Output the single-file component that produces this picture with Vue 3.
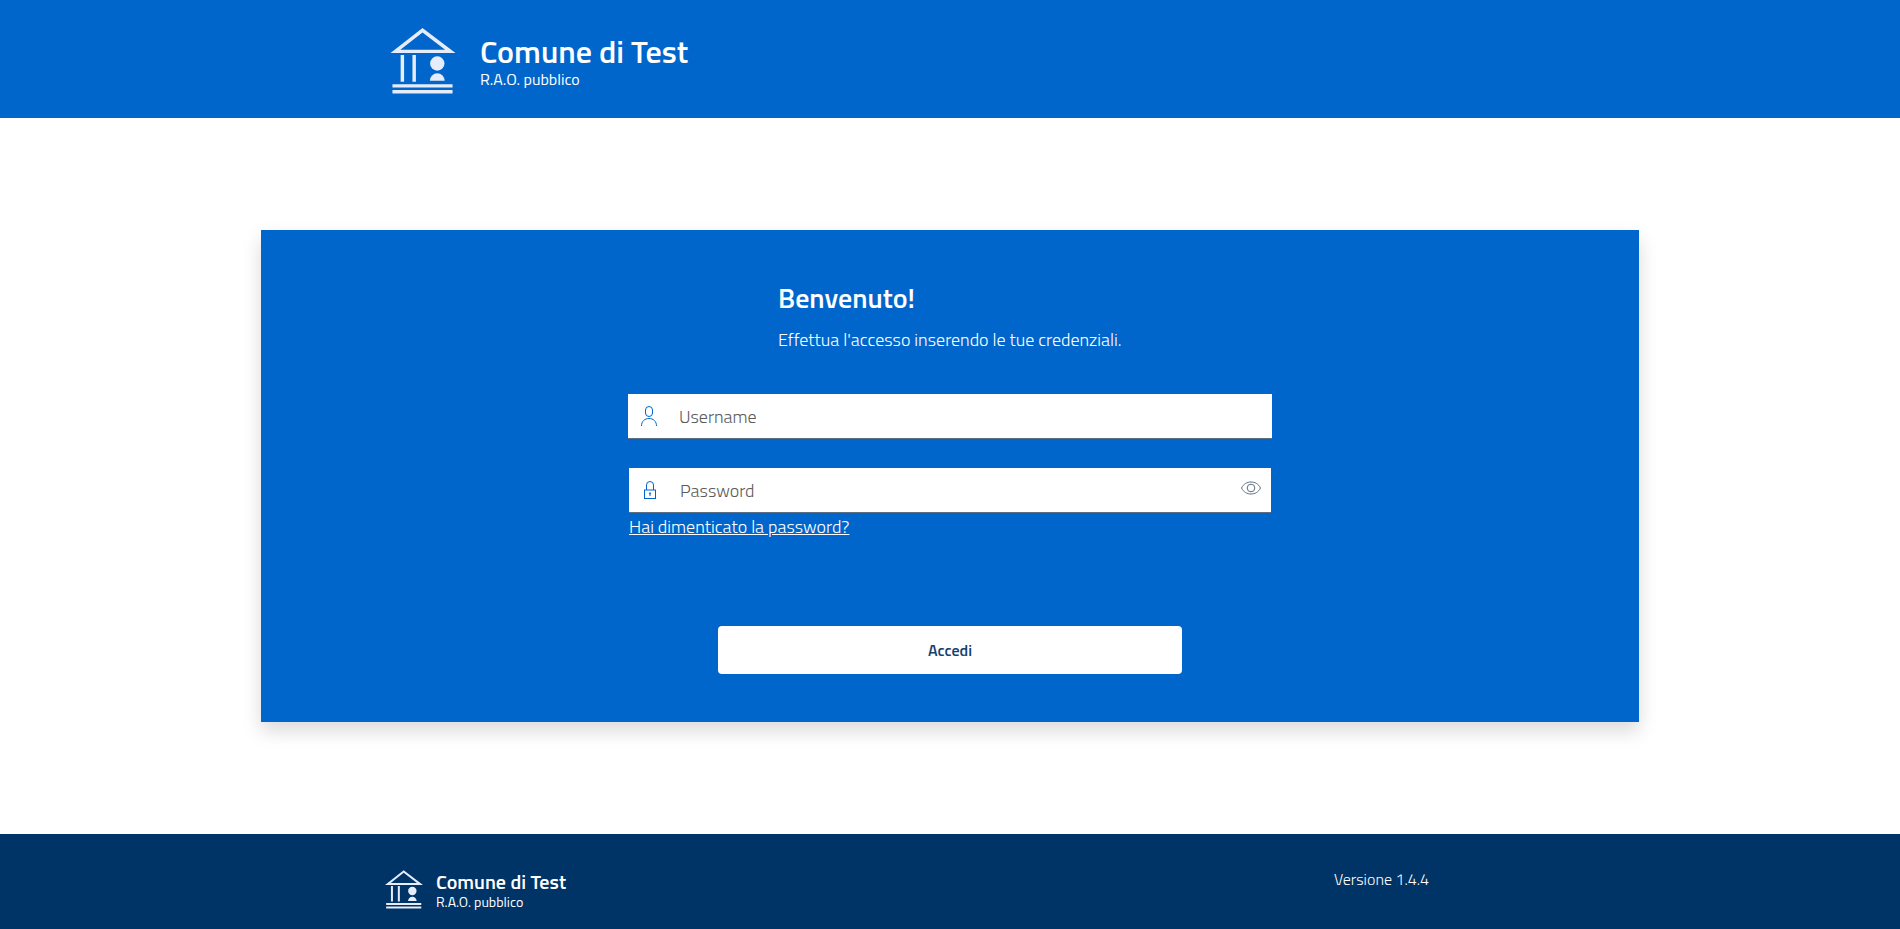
<script setup>
import { ref } from 'vue'

const username = ref('')
const password = ref('')
const showPassword = ref(false)

const logoShapes = [
  'M32.5 0 66 25.5H0ZM32.5 4.5 10 22H55.500Z',
  'M10.300 27.500h3.500v27h-3.500ZM22.300 27.500h3.500v27h-3.500Z',
  'M2 57h61v3.400H2ZM2 63h61v3.400H2Z',
  'M40 53.500a7.500 7.500 0 0 1 15 0Z',
]
</script>

<template>
  <div class="page">
    <header class="header">
      <div class="header-inner">
        <svg class="logo" viewBox="0 0 66 67" aria-hidden="true">
          <path v-for="d in logoShapes" :key="d" :d="d" fill-rule="evenodd" />
          <circle cx="47.500" cy="36" r="7.300" />
        </svg>
        <div class="brand">
          <h2 class="brand-name">Comune di Test</h2>
          <p class="brand-sub">R.A.O. pubblico</p>
        </div>
      </div>
    </header>

    <main class="main">
      <form class="card" @submit.prevent>
        <div class="intro">
          <h1>Benvenuto!</h1>
          <p>Effettua l'accesso inserendo le tue credenziali.</p>
        </div>

        <div class="field">
          <label for="username" aria-label="Username">
            <svg class="icon" viewBox="0 0 24 24" aria-hidden="true">
              <rect x="8.500" y="2.500" width="7" height="10" rx="3.500" />
              <path d="M4.500 22c0-4.700 3.200-7.500 7.500-7.500s7.500 2.800 7.500 7.500" />
            </svg>
          </label>
          <input id="username" v-model="username" type="text" placeholder="Username" />
        </div>

        <div class="secret">
          <div class="field">
            <label for="password" aria-label="Password">
              <svg class="icon" viewBox="0 0 24 24" aria-hidden="true">
                <path d="M8.500 12V7a3.500 3.500 0 0 1 7 0v5" />
                <rect x="6.500" y="12" width="11" height="8.500" />
                <path d="M12 15v3" />
                <circle cx="12" cy="15.300" r=".6" />
              </svg>
            </label>
            <input
              id="password"
              v-model="password"
              :type="showPassword ? 'text' : 'password'"
              placeholder="Password"
            />
            <button
              class="reveal"
              type="button"
              aria-label="Mostra password"
              @click="showPassword = !showPassword"
            >
              <svg viewBox="0 0 24 24" aria-hidden="true">
                <path d="M2.500 12C4.500 8 8 6 12 6s7.500 2 9.500 6c-2 4-5.500 6-9.500 6s-7.500-2-9.500-6Z" />
                <circle cx="12" cy="12" r="3.800" />
              </svg>
            </button>
          </div>
          <a class="forgot" href="#">Hai dimenticato la password?</a>
        </div>

        <button class="submit" type="submit">Accedi</button>
      </form>
    </main>

    <footer class="footer">
      <div class="footer-inner">
        <div class="footer-brand">
          <svg class="logo" viewBox="0 0 66 67" aria-hidden="true">
            <path v-for="d in logoShapes" :key="d" :d="d" fill-rule="evenodd" />
            <circle cx="47.500" cy="36" r="7.300" />
          </svg>
          <div class="brand">
            <h2 class="brand-name">Comune di Test</h2>
            <p class="brand-sub">R.A.O. pubblico</p>
          </div>
        </div>
        <p class="version">Versione 1.4.4</p>
      </div>
    </footer>
  </div>
</template>

<style>
body {
  margin: 0;
}
</style>

<style scoped>
.page {
  display: flex;
  flex-direction: column;
  min-height: 100vh;
  background: #fff;
  color: #fff;
  font-family: "Titillium Web", Lato, sans-serif;
  font-size: 18px;
  font-weight: 300;
  line-height: 28px;
}

h1,
h2,
p {
  margin: 0;
}

.header {
  padding: 28px 24px 24px;
  background: #0066cc;
}

.header-inner,
.footer-inner {
  display: flex;
  max-width: 1130px;
  margin: 0 auto;
}

.header-inner {
  box-sizing: border-box;
  align-items: flex-start;
  gap: 24px;
  padding-left: 5px;
}

.logo {
  flex: none;
  width: 66px;
  height: 66px;
  fill: #e6ecfa;
}

.brand {
  white-space: nowrap;
}

.brand-name {
  font-size: 32px;
  font-weight: 600;
  line-height: 36px;
}

.brand-sub {
  font-size: 16px;
  font-weight: 400;
  line-height: 20px;
}

.header .brand {
  padding-top: 5px;
}

.main {
  flex: 1;
  padding: 112px 24px;
}

.card {
  box-sizing: border-box;
  display: flex;
  flex-direction: column;
  align-items: center;
  max-width: 1378px;
  margin: 0 auto;
  padding: 48px 24px;
  background: #0066cc;
  box-shadow: 0 9px 18px rgba(0, 0, 0, 0.15);
}

.intro {
  width: 344px;
  margin-bottom: 40px;
  white-space: nowrap;
}

.intro h1 {
  margin-bottom: 8px;
  font-size: 28px;
  font-weight: 600;
  line-height: 40px;
}

.field {
  box-sizing: border-box;
  display: flex;
  align-items: center;
  width: 100%;
  max-width: 644px;
  height: 45px;
  background: #fff;
  border-bottom: 1px solid #5c6f82;
}

.field label {
  display: flex;
  flex: none;
  padding: 0 9px;
}

.icon {
  width: 24px;
  height: 24px;
  fill: none;
  stroke: #0066cc;
}

.field input {
  flex: 1;
  min-width: 0;
  height: 44px;
  padding: 0 9px;
  border: 0;
  outline: 0;
  background: transparent;
  color: #17324d;
  font: inherit;
}

.field input::placeholder {
  color: #5c5c5c;
  opacity: 1;
}

.secret {
  width: 100%;
  max-width: 642px;
  margin: 29px 0 85px;
}

.reveal {
  display: flex;
  margin: 0 8px 4px 0;
  padding: 0;
  border: 0;
  background: none;
  cursor: pointer;
}

.reveal svg {
  width: 24px;
  height: 24px;
  fill: none;
  stroke: #5c6f82;
}

.forgot {
  display: block;
  width: fit-content;
  color: #fff;
}

.submit {
  width: 100%;
  max-width: 464px;
  height: 48px;
  border: 0;
  border-radius: 4px;
  background: #fff;
  color: #17406f;
  font-family: inherit;
  font-size: 16px;
  font-weight: 600;
  cursor: pointer;
}

.footer {
  padding: 36px 24px 20px;
  background: #003366;
}

.footer-inner {
  justify-content: space-between;
}

.footer-brand {
  display: flex;
  gap: 13px;
}

.footer .logo {
  width: 38px;
  height: 39px;
}

.footer .brand-name {
  font-size: 20px;
  line-height: 24px;
}

.footer .brand-sub {
  font-size: 14px;
  line-height: 15px;
}

.version {
  width: 181px;
  font-size: 16px;
  line-height: 18px;
}
</style>
